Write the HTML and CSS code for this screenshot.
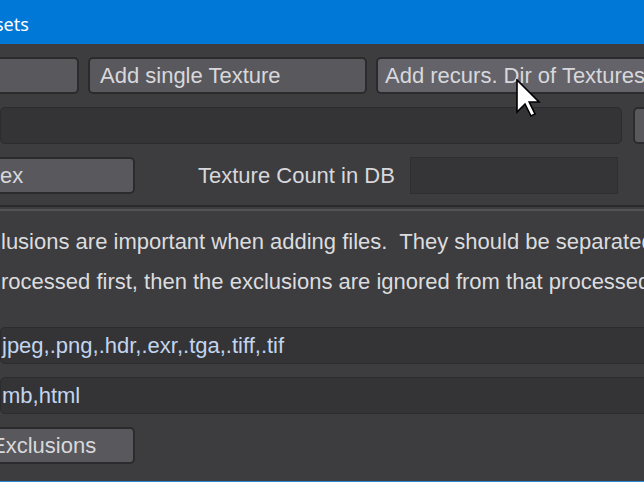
FILE: index.html
```html
<!DOCTYPE html>
<html>
	<head>
		<title>Texture Assets</title>
		<link rel="stylesheet" href="styles.css">
	</head>
	<body>
		<div class="window">
			<header class="titlebar"><span class="title">sets</span></header>
			<main class="content">
				<div class="row first">
					<button class="btn cut lead"></button>
					<button class="btn single">Add single Texture</button>
					<button class="btn recurs hover">Add recurs. Dir of Textures</button>
				</div>
				<div class="row">
					<div class="field cut path"></div>
					<button class="btn browse"></button>
				</div>
				<div class="row">
					<button class="btn cut index">ex</button>
					<label class="caption">Texture Count in DB</label>
					<div class="field count"></div>
				</div>
				<hr class="sep">
				<p class="note">lusions are important when adding files.&nbsp; They should be separated<br>rocessed first, then the exclusions are ignored from that processed list.</p>
				<div class="field cut line ext">jpeg,.png,.hdr,.exr,.tga,.tiff,.tif</div>
				<div class="field cut line excl">mb,html</div>
				<div class="row last">
					<button class="btn cut exclusions">Exclusions</button>
				</div>
			</main>
			<svg class="cursor" viewBox="0 0 13 20" width="26" height="40">
				<path d="M0.5 0.5 L0.5 16.5 L4.5 12.5 L7.5 18.5 L9.5 17.5 L6.6 11.5 L11.5 11.5 Z" fill="#fff" stroke="#000" stroke-width="0.8" stroke-linejoin="miter" />
			</svg>
		</div>
	</body>
</html>
```

FILE: styles.css
```css
body {
	margin: 0;
	background: #3d3d40;
	font-family: "Liberation Sans", Arial, sans-serif;
}

.window {
	position: relative;
	height: 482px;
	overflow: hidden;
	box-sizing: border-box;
	border-bottom: 1px solid #2b87d8;
}

.titlebar {
	display: flex;
	align-items: center;
	height: 44px;
	background: #0078d7;
	color: #fff;
	font-family: "Noto Sans", sans-serif;
	font-size: 18px;
}

.title {
	margin-left: -5px;
	padding-top: 3px;
}

.content {
	display: flex;
	flex-direction: column;
	padding-top: 13px;
	white-space: nowrap;
}

.row {
	display: flex;
	align-items: center;
	height: 37px;
	flex: none;
}

.row + .row, .row.last {
	margin-top: 13px;
}

.btn {
	box-sizing: border-box;
	flex: none;
	height: 37px;
	padding: 0 10px;
	border: 2px solid #2b2b2d;
	border-radius: 5px;
	background: #59585d;
	color: #d8d8dc;
	font: 22px "Liberation Sans", Arial, sans-serif;
	text-align: left;
	white-space: nowrap;
}

.btn.hover {
	background: #646369;
}

.cut {
	border-left: none;
	border-top-left-radius: 0;
	border-bottom-left-radius: 0;
}

.btn.cut {
	padding-left: 0;
}

.lead {
	width: 79px;
}

.single {
	width: 279px;
	margin-left: 9px;
}

.recurs {
	width: 300px;
	margin-left: 9px;
	padding-left: 7px;
}

.field {
	box-sizing: border-box;
	flex: none;
	height: 37px;
	border: 1px solid #2c2c2e;
	border-radius: 5px;
	background: #343436;
}

.path {
	width: 622px;
}

.browse {
	width: 80px;
	margin-left: 11px;
}

.index {
	width: 135px;
}

.caption {
	width: 212px;
	margin-left: 63px;
	color: #d8d8dc;
	font-size: 22px;
}

.count {
	width: 208px;
	border-radius: 0;
	border-color: #2f2f31;
	background: #353537;
}

.sep {
	box-sizing: content-box;
	height: 2px;
	margin: 11px 0 0;
	border: none;
	border-top: 2px solid #2a2a2c;
	border-bottom: 2px solid #535356;
}

.note {
	margin: 11px 0 0;
	padding-left: 1px;
	color: #dcdcde;
	font-size: 22px;
	line-height: 40px;
}

.line {
	width: 720px;
	padding-left: 1px;
	color: #c3d5ef;
	font-size: 22px;
	line-height: 35px;
}

.ext {
	margin-top: 25px;
}

.excl {
	margin-top: 13px;
}

.exclusions {
	width: 135px;
	text-indent: -9px;
}

.cursor {
	position: absolute;
	left: 516px;
	top: 79px;
}
```
